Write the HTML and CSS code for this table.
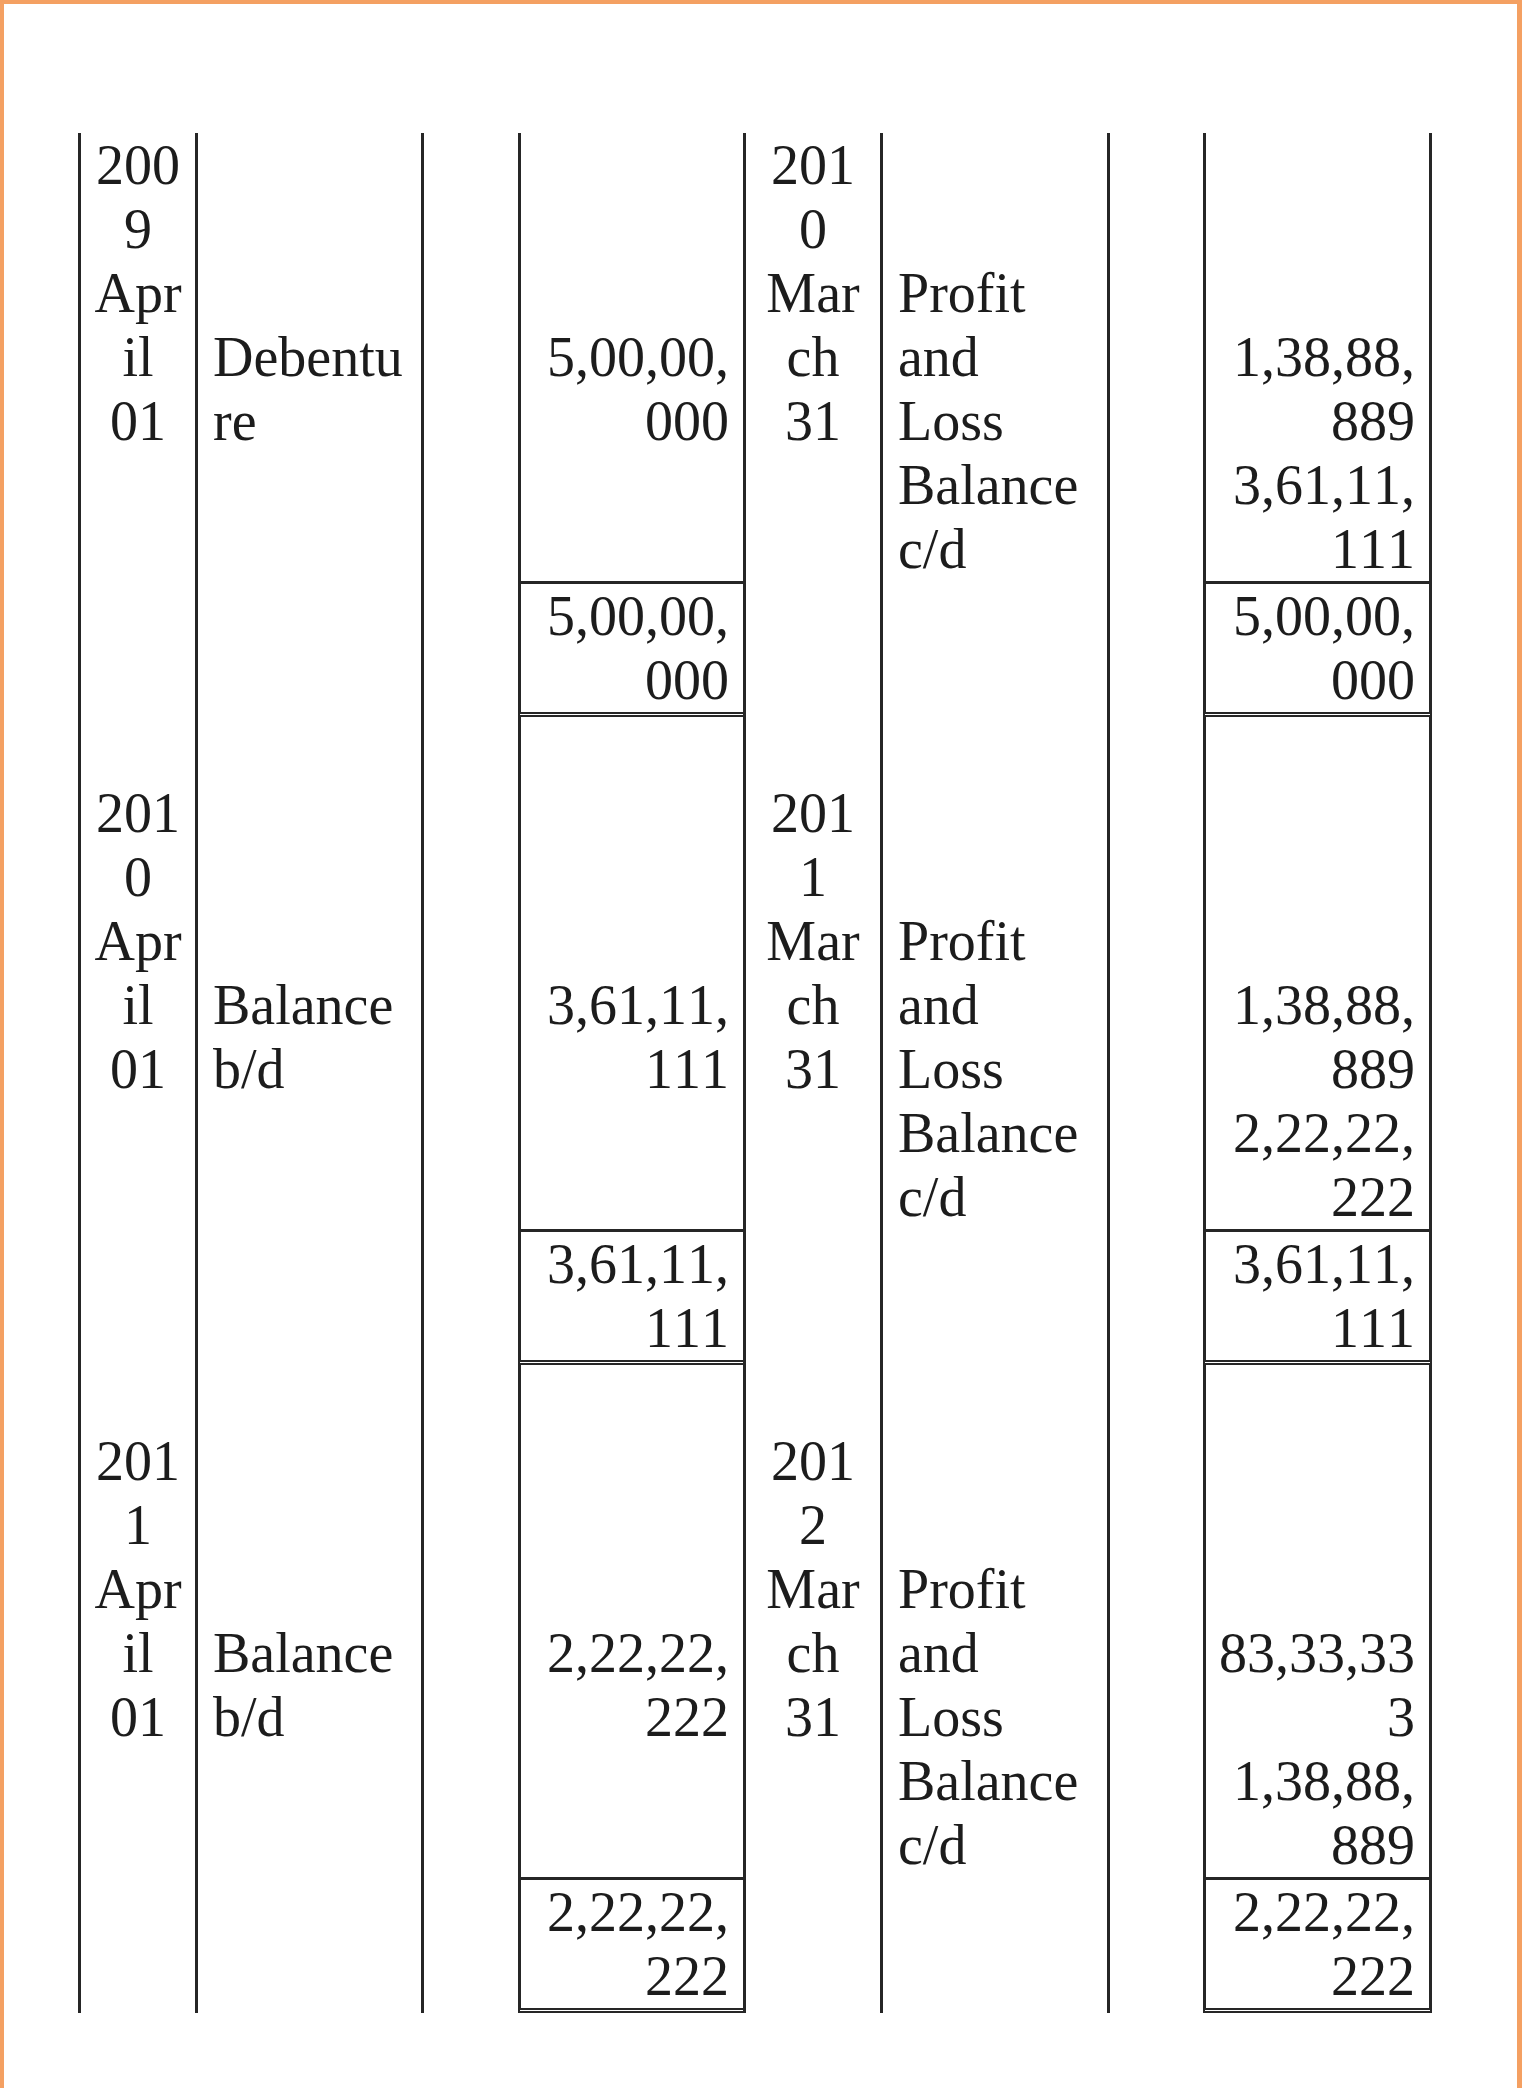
FILE: index.html
```html
<!DOCTYPE html>
<html lang="en">
<head>
  <meta charset="UTF-8" />
  <meta name="viewport" content="width=device-width, initial-scale=1.0"/>
  <title>Debentures Account</title>
  <link rel="stylesheet" href="styles.css">
</head>
<body>
  <div class="page">
    <table class="ledger">
      <colgroup>
        <col class="col-date">
        <col class="col-part">
        <col class="col-jf">
        <col class="col-amt">
        <col class="col-date-cr">
        <col class="col-part-cr">
        <col class="col-jf-cr">
        <col class="col-amt-cr">
      </colgroup>

      <!-- 2009-10 -->
      <tbody>
        <tr>
          <td class="date">2009 April 01</td>
          <td class="part">Debenture</td>
          <td class="jf"></td>
          <td class="amt">5,00,00,000</td>
          <td class="date">2010 March 31</td>
          <td class="part">Profit and Loss</td>
          <td class="jf"></td>
          <td class="amt last">1,38,88,889</td>
        </tr>
        <tr>
          <td class="date"></td>
          <td class="part"></td>
          <td class="jf"></td>
          <td class="amt"></td>
          <td class="date"></td>
          <td class="part">Balance c/d</td>
          <td class="jf"></td>
          <td class="amt last">3,61,11,111</td>
        </tr>
        <tr>
          <td class="date"></td>
          <td class="part"></td>
          <td class="jf"></td>
          <td class="amt total">5,00,00,000</td>
          <td class="date"></td>
          <td class="part"></td>
          <td class="jf"></td>
          <td class="amt total last">5,00,00,000</td>
        </tr>
      </tbody>

      <!-- 2010-11 -->
      <tbody>
        <tr class="gap">
          <td></td><td></td><td></td><td></td>
          <td></td><td></td><td></td><td class="last"></td>
        </tr>
        <tr>
          <td class="date">2010 April 01</td>
          <td class="part">Balance b/d</td>
          <td class="jf"></td>
          <td class="amt">3,61,11,111</td>
          <td class="date">2011 March 31</td>
          <td class="part">Profit and Loss</td>
          <td class="jf"></td>
          <td class="amt last">1,38,88,889</td>
        </tr>
        <tr>
          <td class="date"></td>
          <td class="part"></td>
          <td class="jf"></td>
          <td class="amt"></td>
          <td class="date"></td>
          <td class="part">Balance c/d</td>
          <td class="jf"></td>
          <td class="amt last">2,22,22,222</td>
        </tr>
        <tr>
          <td class="date"></td>
          <td class="part"></td>
          <td class="jf"></td>
          <td class="amt total">3,61,11,111</td>
          <td class="date"></td>
          <td class="part"></td>
          <td class="jf"></td>
          <td class="amt total last">3,61,11,111</td>
        </tr>
      </tbody>

      <!-- 2011-12 -->
      <tbody>
        <tr class="gap">
          <td></td><td></td><td></td><td></td>
          <td></td><td></td><td></td><td class="last"></td>
        </tr>
        <tr>
          <td class="date">2011 April 01</td>
          <td class="part">Balance b/d</td>
          <td class="jf"></td>
          <td class="amt">2,22,22,222</td>
          <td class="date">2012 March 31</td>
          <td class="part">Profit and Loss</td>
          <td class="jf"></td>
          <td class="amt last">83,33,333</td>
        </tr>
        <tr>
          <td class="date"></td>
          <td class="part"></td>
          <td class="jf"></td>
          <td class="amt"></td>
          <td class="date"></td>
          <td class="part">Balance c/d</td>
          <td class="jf"></td>
          <td class="amt last">1,38,88,889</td>
        </tr>
        <tr>
          <td class="date"></td>
          <td class="part"></td>
          <td class="jf"></td>
          <td class="amt total">2,22,22,222</td>
          <td class="date"></td>
          <td class="part"></td>
          <td class="jf"></td>
          <td class="amt total last">2,22,22,222</td>
        </tr>
      </tbody>
    </table>
  </div>
</body>
</html>
```

FILE: styles.css
```css
/* ledger page */
body {
  margin: 0;
  background: #fff;
  color: #1c1c1c;
  font-family: "Liberation Serif", "Times New Roman", serif;
}
.page {
  box-sizing: border-box;
  min-height: 100vh;
  border-top: 4px solid #f4a062;
  border-left: 4px solid #f4a062;
  border-right: 5px solid #f4a062;
  padding: 129px 0 0 74px;
}

/* table */
.ledger {
  table-layout: fixed;
  width: 1354px;
  border-collapse: separate;
  border-spacing: 0;
  font-size: 56px;
  line-height: 64px;
  font-kerning: none;
}
.col-date { width: 117px; }
.col-part { width: 226px; }
.col-jf { width: 97px; }
.col-amt { width: 225px; }
.col-date-cr { width: 137px; }
.col-part-cr { width: 227px; }
.col-jf-cr { width: 96px; }
.col-amt-cr { width: 229px; }

.ledger td {
  padding: 0;
  border-left: 3px solid #262626;
  vertical-align: bottom;
  overflow-wrap: anywhere;
}
.ledger td.last {
  border-right: 3px solid #262626;
}
.ledger td.date {
  padding: 0 12px;
  text-align: center;
}
.ledger td.part {
  padding: 0 12px 0 15px;
  text-align: left;
}
.ledger td.amt {
  padding: 0 14px 0 6px;
  text-align: right;
}
.ledger td.total {
  border-top: 3px solid #262626;
  border-bottom: 5px double #262626;
}
.ledger tr.gap td {
  height: 64px;
}
```
